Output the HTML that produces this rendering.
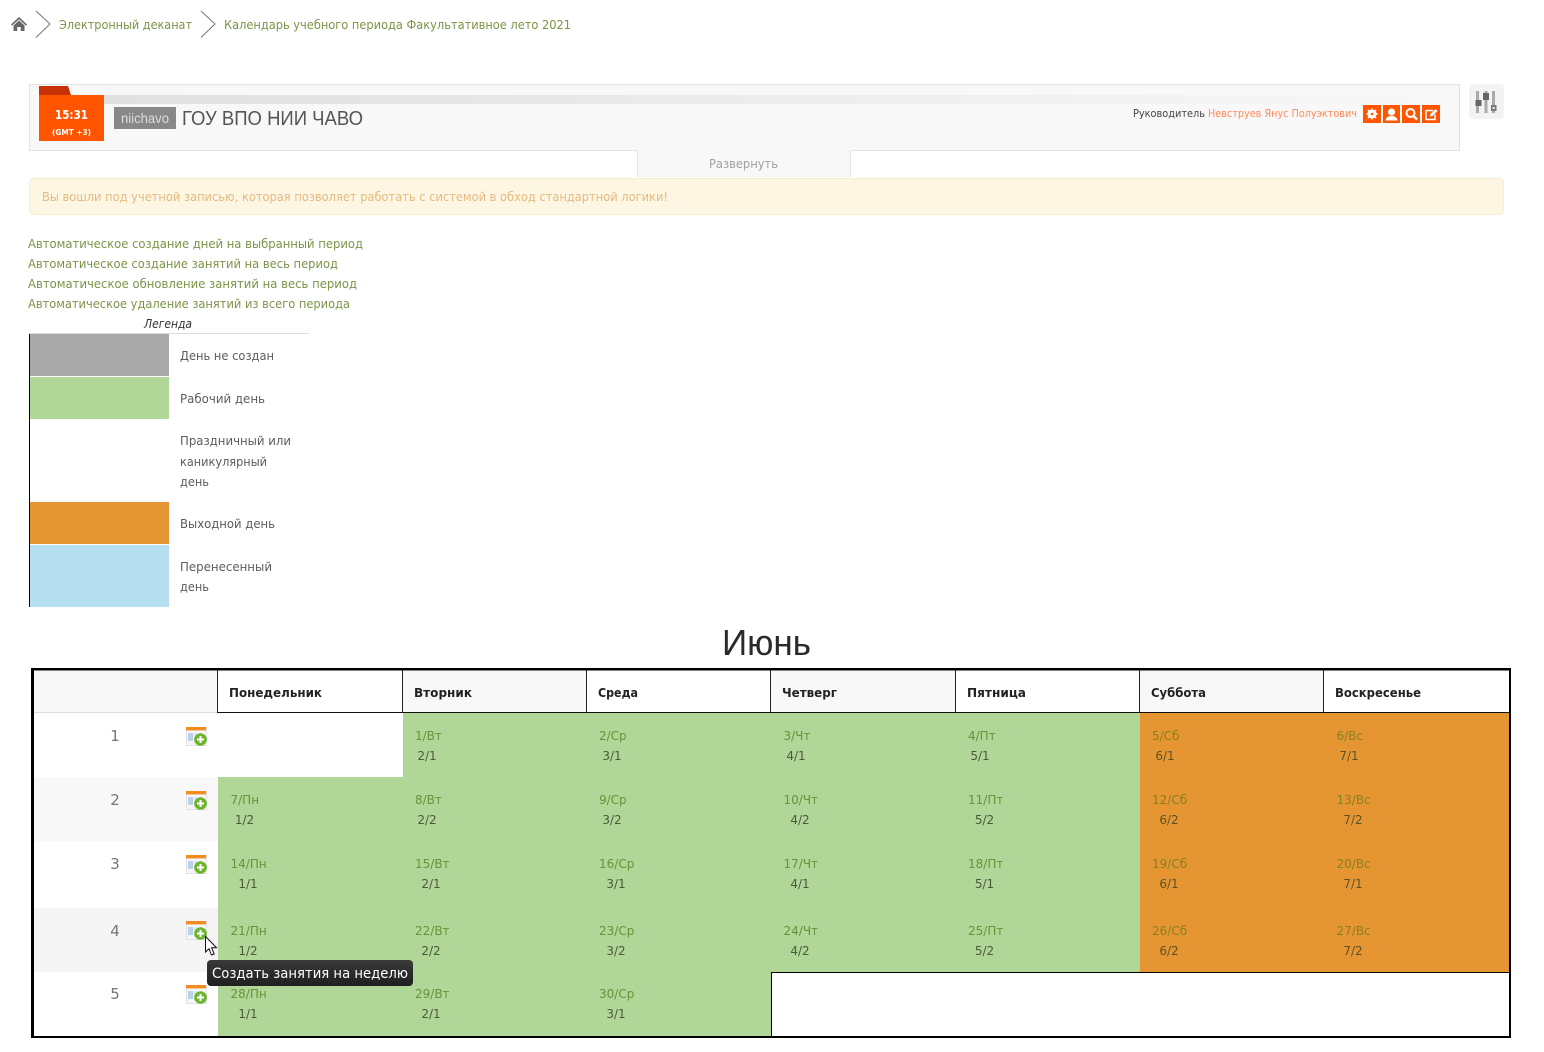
<!DOCTYPE html>
<html lang="ru"><head><meta charset="utf-8"><title>Календарь учебного периода</title>
<style>
html,body{margin:0;padding:0;background:#fff;width:1544px;height:1052px;overflow:hidden}
svg{display:block;font-family:"DejaVu Sans","Liberation Sans",sans-serif}
.l{fill:#7b9448;font-size:12.6px}
.t{fill:#5c5c5c;font-size:12.6px}
.h{fill:#222;font-size:12px;font-weight:bold}
.d{fill:#6a9238;font-size:12px}
.o{fill:#87801f;font-size:12px}
.n{fill:#4d5a3c;font-size:12px;text-anchor:middle}
.m{fill:#5c5226;font-size:12px;text-anchor:middle}
.w{fill:#777;font-size:15px;text-anchor:middle}
.thin{font-family:"Liberation Sans",sans-serif}
</style></head><body>
<svg width="1544" height="1052" viewBox="0 0 1544 1052" xmlns="http://www.w3.org/2000/svg">
<defs>
<linearGradient id="bar"><stop offset="0" stop-color="#e0e0e0"/><stop offset="1" stop-color="#f8f8f8"/></linearGradient>
<linearGradient id="tip" x1="0" y1="0" x2="0" y2="1"><stop offset="0" stop-color="#3a3a3a"/><stop offset="1" stop-color="#202020"/></linearGradient>
<symbol id="cal" width="22" height="21" viewBox="0 0 22 21">
<rect x="0.5" y="0.5" width="20" height="18" fill="#f4f6f8" stroke="#e2e2e2"/>
<rect x="0" y="0" width="20" height="3.4" fill="#f58a1f"/>
<rect x="2" y="6" width="5" height="8" fill="#b9d2ea"/><rect x="8" y="6" width="3" height="8" fill="#dfe8f0"/>
<circle cx="14.5" cy="12.5" r="6.3" fill="#6db52e"/>
<path d="M14.5 9v7M11 12.5h7" stroke="#fff" stroke-width="2"/>
</symbol>
</defs>

<!-- breadcrumb -->
<path d="M11 24.5 19 17l8 7.5-1 1.2-7-6.4-7 6.4z" fill="#666"/>
<path d="M13.5 25.5 19 20.5l5.5 5V31h-3.700v-4h-3.600v4h-3.700z" fill="#666"/>
<path d="M36 11 50 24 36 37.500M201 11l14 13-14 13.500" fill="none" stroke="#777" stroke-width="1"/>
<text class="l" x="59" y="29" textLength="133" lengthAdjust="spacingAndGlyphs">Электронный деканат</text>
<text class="l" x="224" y="29" textLength="347" lengthAdjust="spacingAndGlyphs">Календарь учебного периода Факультативное лето 2021</text>

<!-- header panel -->
<rect x="29.500" y="84.500" width="1430" height="66" fill="#f8f8f8" stroke="#e3e3e3"/>
<rect x="104" y="95" width="1340" height="9" fill="url(#bar)"/>
<path d="M39 86h29l3 9H39z" fill="#c63205"/>
<rect x="39" y="95" width="65" height="46" fill="#ff5500"/>
<text x="55" y="119" fill="#fff" font-size="12" font-weight="bold" textLength="33" lengthAdjust="spacingAndGlyphs">15:31</text>
<text x="52" y="135" fill="#fff" font-size="8" font-weight="bold" textLength="39" lengthAdjust="spacingAndGlyphs">(GMT +3)</text>
<rect x="114" y="107" width="62" height="22" fill="#888"/>
<text class="thin" x="121" y="123" fill="#ddd" font-size="14" textLength="48" lengthAdjust="spacingAndGlyphs">niichavo</text>
<text class="thin" x="182" y="125" fill="#555" font-size="20" textLength="181" lengthAdjust="spacingAndGlyphs">ГОУ ВПО НИИ ЧАВО</text>
<text x="1133" y="117" fill="#444" font-size="11" textLength="72" lengthAdjust="spacingAndGlyphs">Руководитель</text>
<text x="1208" y="117" fill="#ff8a5c" font-size="11" textLength="149" lengthAdjust="spacingAndGlyphs">Невструев Янус Полуэктович</text>

<rect x="1363" y="105" width="18" height="18" fill="#ff5500"/>
<circle cx="1372" cy="114" r="3.300" fill="none" stroke="#fff" stroke-width="2.400"/>
<path d="M1372 108.500v11M1366.500 114h11M1368 110l8 8M1376 110l-8 8" stroke="#fff" stroke-width="1.700"/>
<circle cx="1372" cy="114" r="1.300" fill="#ff5500"/>
<rect x="1383" y="105" width="17" height="18" fill="#ff5500"/>
<circle cx="1391.500" cy="112" r="3.600" fill="#fff"/><path d="M1385.500 120.500c.5-3.500 3-4.500 6-4.500s5.500 1 6 4.500z" fill="#fff"/>
<rect x="1402" y="105" width="18" height="18" fill="#ff5500"/>
<circle cx="1410.500" cy="113" r="4" fill="none" stroke="#fff" stroke-width="2"/><path d="M1413.500 116l3.500 3.500" stroke="#fff" stroke-width="2.400"/>
<rect x="1422" y="105" width="18" height="18" fill="#ff5500"/>
<path d="M1433 110.500h-7v9h9v-5" fill="none" stroke="#fff" stroke-width="1.500"/><path d="M1430 116.500l.5-2.500 5-5 2 2-5 5z" fill="#fff"/>

<rect x="1469" y="84" width="35" height="35" rx="4" fill="#f3f3f3"/>
<path d="M1477.500 91v22M1486 91v22M1493.500 91v22" stroke="#aaa" stroke-width="3"/>
<rect x="1475.500" y="100" width="6" height="6" fill="#666"/><rect x="1483" y="93" width="6" height="7" fill="#666"/>
<rect x="1491" y="105" width="5.500" height="6" fill="#777"/><rect x="1492.700" y="107" width="2" height="2" fill="#eee"/>

<path d="M637.500 177V150.500h213V177" fill="#f8f8f8" stroke="#e3e3e3"/>
<rect x="638" y="149" width="212" height="3" fill="#f8f8f8"/>
<text x="709" y="168" fill="#a0a0a0" font-size="12.600" textLength="69" lengthAdjust="spacingAndGlyphs">Развернуть</text>

<!-- alert -->
<rect x="29.500" y="178.500" width="1474" height="36" rx="4" fill="#fdf6e3" stroke="#faebcc"/>
<text x="42" y="201" fill="#e3bb80" font-size="12.600" textLength="626" lengthAdjust="spacingAndGlyphs">Вы вошли под учетной записью, которая позволяет работать с системой в обход стандартной логики!</text>

<!-- links -->
<text class="l" x="28" y="248" textLength="335" lengthAdjust="spacingAndGlyphs">Автоматическое создание дней на выбранный период</text>
<text class="l" x="28" y="268" textLength="310" lengthAdjust="spacingAndGlyphs">Автоматическое создание занятий на весь период</text>
<text class="l" x="28" y="288" textLength="329" lengthAdjust="spacingAndGlyphs">Автоматическое обновление занятий на весь период</text>
<text class="l" x="28" y="308" textLength="322" lengthAdjust="spacingAndGlyphs">Автоматическое удаление занятий из всего периода</text>

<!-- legend -->
<text x="144" y="328" fill="#333" font-size="12.600" font-style="italic" textLength="48" lengthAdjust="spacingAndGlyphs">Легенда</text>
<rect x="29" y="333" width="280" height="1" fill="#ddd"/>
<rect x="29" y="334" width="1" height="273" fill="#000"/>
<rect x="30" y="334" width="139" height="42" fill="#a9a9a9"/>
<rect x="30" y="377" width="139" height="42" fill="#b0d698"/>
<rect x="30" y="502" width="139" height="42" fill="#e59632"/>
<rect x="30" y="545" width="139" height="62" fill="#b5dff0"/>
<text class="t" x="180" y="360" textLength="94" lengthAdjust="spacingAndGlyphs">День не создан</text>
<text class="t" x="180" y="403" textLength="85" lengthAdjust="spacingAndGlyphs">Рабочий день</text>
<text class="t" x="180" y="445" textLength="111" lengthAdjust="spacingAndGlyphs">Праздничный или</text>
<text class="t" x="180" y="466" textLength="87" lengthAdjust="spacingAndGlyphs">каникулярный</text>
<text class="t" x="180" y="486" textLength="29" lengthAdjust="spacingAndGlyphs">день</text>
<text class="t" x="180" y="528" textLength="95" lengthAdjust="spacingAndGlyphs">Выходной день</text>
<text class="t" x="180" y="571" textLength="92" lengthAdjust="spacingAndGlyphs">Перенесенный</text>
<text class="t" x="180" y="591" textLength="29" lengthAdjust="spacingAndGlyphs">день</text>

<text class="thin" x="722" y="655" fill="#2a2a2a" font-size="36" textLength="89" lengthAdjust="spacingAndGlyphs">Июнь</text>

<!-- calendar backgrounds -->
<rect x="34" y="671" width="183" height="41" fill="#f8f8f8"/>
<rect x="403" y="671" width="183" height="41" fill="#f8f8f8"/>
<rect x="771" y="671" width="184" height="41" fill="#f8f8f8"/>
<rect x="1140" y="671" width="183" height="41" fill="#f8f8f8"/>
<rect x="34" y="712" width="183" height="1" fill="#ddd"/>
<rect x="34" y="777" width="184" height="64" fill="#f8f8f8"/>
<rect x="34" y="908" width="184" height="64" fill="#f5f5f5"/>
<rect x="403" y="713" width="737" height="64" fill="#b0d698"/>
<rect x="218" y="777" width="922" height="195" fill="#b0d698"/>
<rect x="1140" y="713" width="369" height="259" fill="#e59632"/>
<rect x="218" y="972" width="553" height="64" fill="#b0d698"/>
<!-- calendar lines -->
<rect x="217" y="712" width="1292" height="1" fill="#111"/>
<path d="M217.500 670v42M402.500 670v42M586.500 670v42M770.500 670v42M955.500 670v42M1139.500 670v42M1323.500 670v42" stroke="#222" stroke-width="1"/>
<rect x="771" y="972" width="738" height="1" fill="#000"/>
<rect x="771" y="972" width="1" height="64" fill="#000"/>
<rect x="31" y="668" width="1480" height="2.500" fill="#000"/>
<rect x="31" y="1036" width="1480" height="2" fill="#000"/>
<rect x="31" y="668" width="3" height="370" fill="#000"/>
<rect x="1509" y="668" width="2" height="370" fill="#000"/>

<!-- header labels -->
<text class="h" x="229" y="697" textLength="93" lengthAdjust="spacingAndGlyphs">Понедельник</text>
<text class="h" x="414" y="697" textLength="58" lengthAdjust="spacingAndGlyphs">Вторник</text>
<text class="h" x="598" y="697" textLength="40" lengthAdjust="spacingAndGlyphs">Среда</text>
<text class="h" x="782" y="697" textLength="55" lengthAdjust="spacingAndGlyphs">Четверг</text>
<text class="h" x="967" y="697" textLength="59" lengthAdjust="spacingAndGlyphs">Пятница</text>
<text class="h" x="1151" y="697" textLength="55" lengthAdjust="spacingAndGlyphs">Суббота</text>
<text class="h" x="1335" y="697" textLength="86" lengthAdjust="spacingAndGlyphs">Воскресенье</text>

<!-- week column -->
<text class="w" x="115" y="741">1</text><text class="w" x="115" y="805">2</text><text class="w" x="115" y="869">3</text><text class="w" x="115" y="936">4</text><text class="w" x="115" y="999">5</text>
<use href="#cal" x="186" y="727" width="22" height="21"/>
<use href="#cal" x="186" y="791" width="22" height="21"/>
<use href="#cal" x="186" y="855" width="22" height="21"/>
<use href="#cal" x="186" y="921" width="22" height="21"/>
<use href="#cal" x="186" y="985" width="22" height="21"/>

<!-- row 1 -->
<text class="d" x="415" y="740">1/Вт</text><text class="n" x="427" y="760">2/1</text>
<text class="d" x="599" y="740">2/Ср</text><text class="n" x="612" y="760">3/1</text>
<text class="d" x="783.500" y="740">3/Чт</text><text class="n" x="796" y="760">4/1</text>
<text class="d" x="968" y="740">4/Пт</text><text class="n" x="980" y="760">5/1</text>
<text class="o" x="1152" y="740">5/Сб</text><text class="m" x="1165" y="760">6/1</text>
<text class="o" x="1336.500" y="740">6/Вс</text><text class="m" x="1349" y="760">7/1</text>
<!-- row 2 -->
<text class="d" x="230.500" y="804">7/Пн</text><text class="n" x="244.500" y="824">1/2</text>
<text class="d" x="415" y="804">8/Вт</text><text class="n" x="427" y="824">2/2</text>
<text class="d" x="599" y="804">9/Ср</text><text class="n" x="612" y="824">3/2</text>
<text class="d" x="783.500" y="804">10/Чт</text><text class="n" x="800" y="824">4/2</text>
<text class="d" x="968" y="804">11/Пт</text><text class="n" x="984.500" y="824">5/2</text>
<text class="o" x="1152" y="804">12/Сб</text><text class="m" x="1169" y="824">6/2</text>
<text class="o" x="1336.500" y="804">13/Вс</text><text class="m" x="1353" y="824">7/2</text>
<!-- row 3 -->
<text class="d" x="230.500" y="868">14/Пн</text><text class="n" x="248" y="888">1/1</text>
<text class="d" x="415" y="868">15/Вт</text><text class="n" x="431" y="888">2/1</text>
<text class="d" x="599" y="868">16/Ср</text><text class="n" x="616" y="888">3/1</text>
<text class="d" x="783.500" y="868">17/Чт</text><text class="n" x="800" y="888">4/1</text>
<text class="d" x="968" y="868">18/Пт</text><text class="n" x="984.500" y="888">5/1</text>
<text class="o" x="1152" y="868">19/Сб</text><text class="m" x="1169" y="888">6/1</text>
<text class="o" x="1336.500" y="868">20/Вс</text><text class="m" x="1353" y="888">7/1</text>
<!-- row 4 -->
<text class="d" x="230.500" y="935">21/Пн</text><text class="n" x="248" y="955">1/2</text>
<text class="d" x="415" y="935">22/Вт</text><text class="n" x="431" y="955">2/2</text>
<text class="d" x="599" y="935">23/Ср</text><text class="n" x="616" y="955">3/2</text>
<text class="d" x="783.500" y="935">24/Чт</text><text class="n" x="800" y="955">4/2</text>
<text class="d" x="968" y="935">25/Пт</text><text class="n" x="984.500" y="955">5/2</text>
<text class="o" x="1152" y="935">26/Сб</text><text class="m" x="1169" y="955">6/2</text>
<text class="o" x="1336.500" y="935">27/Вс</text><text class="m" x="1353" y="955">7/2</text>
<!-- row 5 -->
<text class="d" x="230.500" y="998">28/Пн</text><text class="n" x="248" y="1018">1/1</text>
<text class="d" x="415" y="998">29/Вт</text><text class="n" x="431" y="1018">2/1</text>
<text class="d" x="599" y="998">30/Ср</text><text class="n" x="616" y="1018">3/1</text>

<!-- tooltip -->
<rect x="207" y="960" width="206" height="26" rx="4" fill="url(#tip)"/>
<text x="212" y="978" fill="#fff" font-size="14.500" textLength="196" lengthAdjust="spacingAndGlyphs">Создать занятия на неделю</text>
<!-- cursor -->
<path d="M205.500 936.500v15.500l3.500-3.300 2.500 6.300 2.700-1-2.600-6.200h5z" fill="#fff" stroke="#111" stroke-width="1"/>
</svg>
</body></html>
